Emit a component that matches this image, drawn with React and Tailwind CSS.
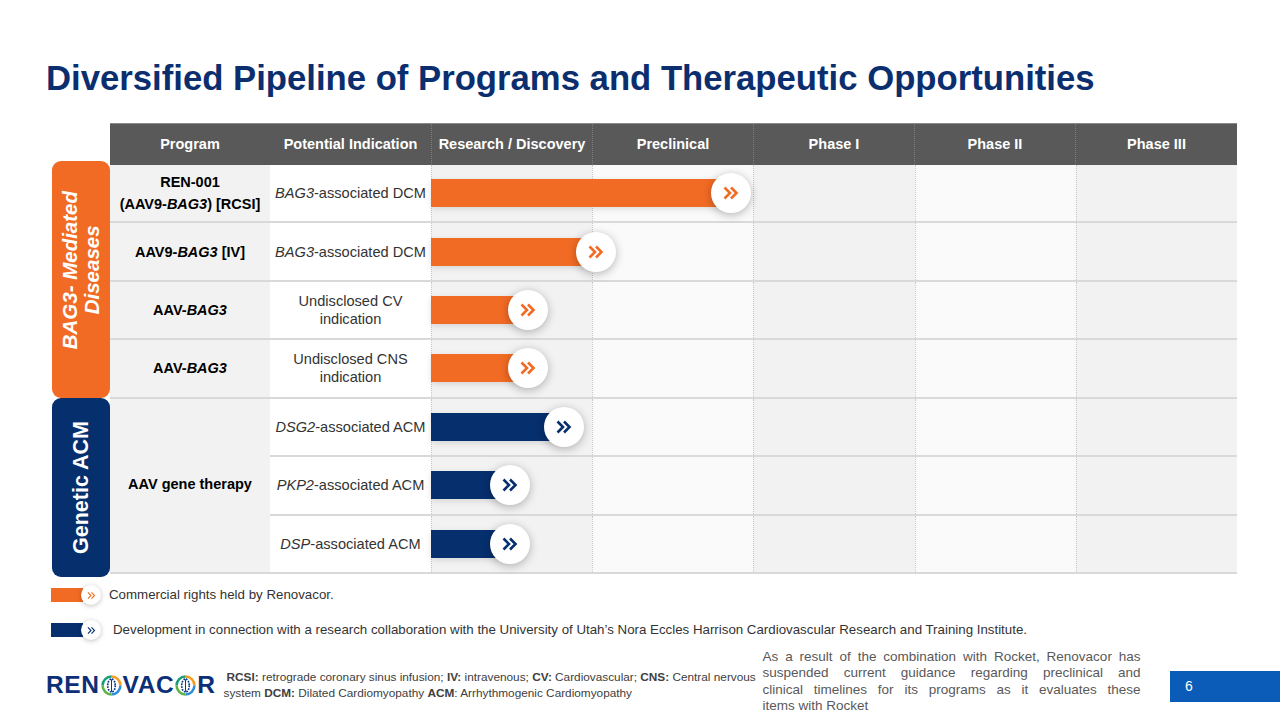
import React from 'react';

const ORANGE = '#f26b24';
const NAVY = '#062f6e';

const rows = [
    { program: <><div>REN-001</div><div>(AAV9-<i>BAG3</i>) [RCSI]</div></>, indication: <><i>BAG3</i>-associated DCM</>, color: ORANGE, len: 300 },
    { program: <>AAV9-<i>BAG3</i> [IV]</>, indication: <><i>BAG3</i>-associated DCM</>, color: ORANGE, len: 165 },
    { program: <>AAV-<i>BAG3</i></>, indication: <>Undisclosed CV<br />indication</>, color: ORANGE, len: 97 },
    { program: <>AAV-<i>BAG3</i></>, indication: <>Undisclosed CNS<br />indication</>, color: ORANGE, len: 97 },
    { program: null, indication: <><i>DSG2</i>-associated ACM</>, color: NAVY, len: 133 },
    { program: null, indication: <><i>PKP2</i>-associated ACM</>, color: NAVY, len: 79 },
    { program: null, indication: <><i>DSP</i>-associated ACM</>, color: NAVY, len: 79 },
];

const phaseBgs = ['bg-[#f2f2f2]', 'bg-[#fafafb]', 'bg-[#f2f2f2]', 'bg-[#fafafb]', 'bg-[#f2f2f2]'];

const Chevrons = ({ color, size = 20, stroke = 2.6 }) => (
    <svg width={size} height={size} viewBox="0 0 20 20" fill="none">
        <path d="M3.5 4.5 L9 10 L3.5 15.5" stroke={color} strokeWidth={stroke} />
        <path d="M10 4.5 L15.5 10 L10 15.5" stroke={color} strokeWidth={stroke} />
    </svg>
);

const Globe = () => (
    <svg width="21" height="21" viewBox="0 0 20 20" className="mx-[1px]">
        <path d="M10 1.5 A8.5 8.5 0 0 1 18.5 10" stroke="#f39c1f" strokeWidth="2.4" fill="none" />
        <path d="M18.5 10 A8.5 8.5 0 0 1 10 18.5" stroke="#2a8fd8" strokeWidth="2.4" fill="none" />
        <path d="M10 18.5 A8.5 8.5 0 0 1 1.5 10" stroke="#5cb245" strokeWidth="2.4" fill="none" />
        <path d="M1.5 10 A8.5 8.5 0 0 1 10 1.5" stroke="#1b9e77" strokeWidth="2.4" fill="none" />
        <ellipse cx="10" cy="10" rx="3.6" ry="6.2" stroke="#0b3a8a" strokeWidth="1.6" fill="none" strokeDasharray="1.6 1" />
        <line x1="10" y1="4" x2="10" y2="16" stroke="#0b3a8a" strokeWidth="1" />
    </svg>
);

const PhaseArea = ({ color, len }) => (
    <div className="relative h-full border-b-2 border-[#d9d9d9]">
        <div className="grid grid-cols-5 h-full">
            {phaseBgs.map((bg, i) => (
                <div key={i} className={`${bg} border-l border-dotted border-[#c9c9c9]`} />
            ))}
        </div>
        <div className="absolute left-0 top-1/2 -translate-y-1/2 h-[28px] shadow-[0_2px_6px_rgba(0,0,0,0.12)]" style={{ width: len, backgroundColor: color }} />
        <div
            className="absolute top-1/2 -translate-y-1/2 w-[40px] h-[40px] rounded-full bg-white flex items-center justify-center shadow-[0_2px_10px_rgba(0,0,0,0.28)]"
            style={{ left: len - 20 }}
        >
            <Chevrons color={color} />
        </div>
    </div>
);

const LegendItem = ({ color, gap, children }) => (
    <div className="flex items-center h-[14px]">
        <div className="w-[32px] h-[14px]" style={{ backgroundColor: color }} />
        <div className="-ml-[2px] w-[20px] h-[20px] rounded-full bg-white shadow-[0_1px_5px_rgba(0,0,0,0.25)] flex items-center justify-center">
            <Chevrons color={color} size={11} stroke={2} />
        </div>
        <span className={gap}>{children}</span>
    </div>
);

const App = () => {
    return (
        <div className="relative w-[1280px] h-[720px] bg-white overflow-hidden font-['Liberation_Sans',Arial,sans-serif]">
            <h1 className="pl-[46px] pt-[58px] text-[34.7px] leading-[40px] font-bold text-[#0b2e6f]">
                Diversified Pipeline of Programs and Therapeutic Opportunities
            </h1>

            <div className="flex pl-[52px] mt-[25px]">
                {/* side labels */}
                <div className="w-[58px] pt-[38px] flex flex-col">
                    <div className="h-[237px] rounded-[9px] bg-[#f26b24] flex items-center justify-center pb-[18px]">
                        <div className="[writing-mode:vertical-rl] rotate-180 text-white font-bold italic text-[20.5px] leading-[22px] text-center whitespace-nowrap">
                            BAG3- Mediated<br />Diseases
                        </div>
                    </div>
                    <div className="h-[179px] rounded-[9px] bg-[#062f6e] flex items-center justify-center">
                        <div className="[writing-mode:vertical-rl] rotate-180 text-white font-bold text-[21.5px] leading-[22px] whitespace-nowrap">
                            Genetic ACM
                        </div>
                    </div>
                </div>

                {/* table */}
                <div className="w-[1127px]">
                    <div className="grid grid-cols-[160px_161px_161px_161px_161px_161px_162px] h-[42px] bg-[#595959] text-white font-bold text-[14.5px] border-t border-[#8a8a8a]">
                        {['Program', 'Potential Indication', 'Research / Discovery', 'Preclinical', 'Phase I', 'Phase II', 'Phase III'].map((h, i) => (
                            <div key={h} className={`flex items-center justify-center whitespace-nowrap ${i > 1 ? 'border-l border-dotted border-[#7d7d7d]' : ''}`}>
                                {h}
                            </div>
                        ))}
                    </div>
                    <div className="grid grid-cols-[160px_161px_806px] auto-rows-[58.43px]">
                        {rows.map((r, i) => (
                            <React.Fragment key={i}>
                                {i < 4 && (
                                    <div className="bg-[#f2f2f2] border-b-2 border-[#d9d9d9] flex items-center justify-center text-center font-bold text-[14.5px] leading-[22px] text-black whitespace-nowrap">
                                        <div>{r.program}</div>
                                    </div>
                                )}
                                {i === 4 && (
                                    <div className="row-span-3 bg-[#f2f2f2] border-b-2 border-[#d9d9d9] flex items-center justify-center font-bold text-[14.5px] text-black">
                                        AAV gene therapy
                                    </div>
                                )}
                                <div className="bg-white border-b-2 border-[#d9d9d9] flex items-center justify-center text-center text-[14.6px] leading-[18px] text-[#333333] whitespace-nowrap">
                                    <div>{r.indication}</div>
                                </div>
                                <PhaseArea color={r.color} len={r.len} />
                            </React.Fragment>
                        ))}
                    </div>
                </div>
            </div>

            {/* legend */}
            <div className="pl-[51px] mt-[11px] flex flex-col gap-[21px] text-[13.3px] text-[#333333]">
                <LegendItem color={ORANGE} gap="ml-[8px]">Commercial rights held by Renovacor.</LegendItem>
                <LegendItem color={NAVY} gap="ml-[12px]">Development in connection with a research collaboration with the University of Utah’s Nora Eccles Harrison Cardiovascular Research and Training Institute.</LegendItem>
            </div>

            {/* footer */}
            <div className="absolute left-0 right-0 top-[649px] flex items-start">
                <div className="ml-[46px] mt-[24px] flex items-center text-[#0c2f77] font-black text-[24.5px] leading-none tracking-[0.6px]">
                    <span>REN</span><Globe /><span>VAC</span><Globe /><span>R</span>
                </div>
                <div className="ml-[8px] mt-[20px] w-[539px] text-[11.8px] leading-[16px] text-[#404040] whitespace-nowrap">
                    <div className="pl-[3px]"><b>RCSI:</b> retrograde coronary sinus infusion; <b>IV:</b> intravenous; <b>CV:</b> Cardiovascular; <b>CNS:</b> Central nervous</div>
                    <div>system <b>DCM:</b> Dilated Cardiomyopathy <b>ACM</b>: Arrhythmogenic Cardiomyopathy</div>
                </div>
                <div className="w-[378px] text-[13.5px] leading-[16.3px] text-[#595959]">
                    <div className="whitespace-nowrap [text-align-last:justify]">As a result of the combination with Rocket, Renovacor has</div>
                    <div className="whitespace-nowrap [text-align-last:justify]">suspended current guidance regarding preclinical and</div>
                    <div className="whitespace-nowrap [text-align-last:justify]">clinical timelines for its programs as it evaluates these</div>
                    <div className="whitespace-nowrap">items with Rocket</div>
                </div>
                <div className="ml-auto mt-[22px] w-[110px] h-[31px] bg-[#0a5cb8] text-white text-[14px] flex items-center pl-[15px]">
                    6
                </div>
            </div>
        </div>
    );
};

export default App;
